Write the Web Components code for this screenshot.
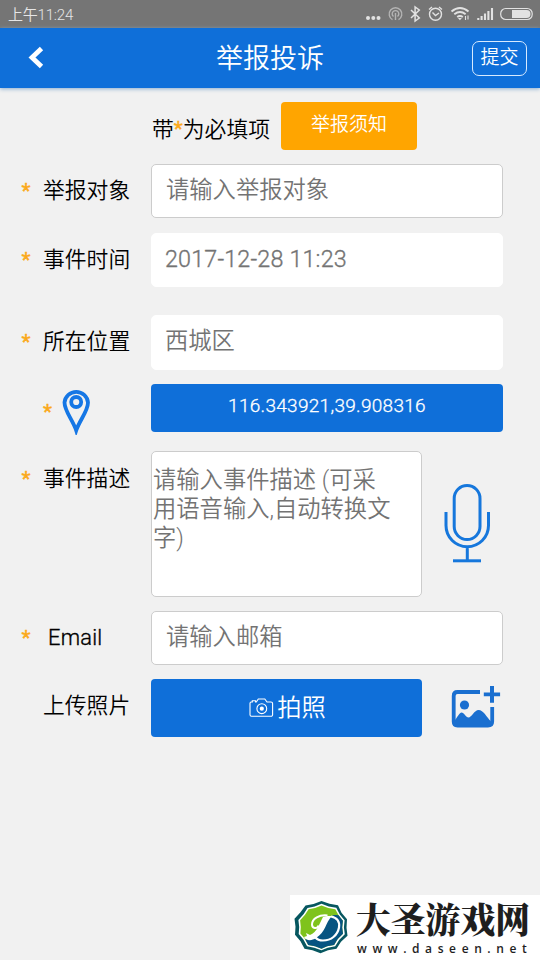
<!DOCTYPE html>
<html lang="zh-CN">
<head>
<meta charset="utf-8">
<title>举报投诉</title>
<style>
html,body{margin:0;height:100%;background:#f1f1f1}
body{font-family:Roboto,"Noto Sans CJK SC",sans-serif;overflow:hidden}
</style>
</head>
<body>
<report-page></report-page>
<script>
const define = (name, html) => customElements.define(name, class extends HTMLElement {
  constructor() {
    super();
    const t = document.createElement('template');
    t.innerHTML = html;
    this.attachShadow({mode: 'open'}).appendChild(t.content.cloneNode(true));
  }
});

define('status-bar', `
<style>
:host{display:flex;box-sizing:border-box;height:28px;padding:0 7px 0 8px;background:#757575;color:#e6e6e6;align-items:center;justify-content:space-between;font-size:15px;line-height:28px}
span{font-weight:350;letter-spacing:-.2px;padding-top:1px}
svg{display:block}
</style>
<span>上午11:24</span>
<svg width="170" height="28" viewBox="363 0 170 28" fill="none" stroke="#e2e2e2" stroke-width="1.4">
  <g fill="#e2e2e2" stroke="none"><circle cx="368" cy="18" r="2"/><circle cx="373.300" cy="18" r="2"/><circle cx="378.500" cy="18" r="2"/></g>
  <g stroke="#b4b4b4"><path d="M392.500 19.600a6.300 6.300 0 1 1 6 0M393.500 16.500a3.300 3.300 0 1 1 4 0M395.500 13v7"/></g>
  <path d="M411 10l8.300 8-4.200 3V7l4.200 3-8.300 8" stroke-width="1.500"/>
  <circle cx="435.500" cy="14.200" r="6"/><path d="M432.500 12.500l3 3 3.500-2.500M429 9.500l3-2.500M442 9.500L439 7"/>
  <path d="M451.500 11.500q8.500-7 17 0M454.300 14.200q5.700-4.500 11.300 0M457.200 17q2.800-2 5.600 0" stroke-width="1.900"/><path d="M459.900 20.300l-2-2.300h4z" fill="#e2e2e2" stroke="none"/><path d="M465.500 20v-4M468 15.500v4" stroke-width="1.100"/>
  <path d="M478.300 20v-2M481.600 20v-4M485 20v-6.500M488.400 20V11M492 20V8" stroke-width="2.100"/>
  <rect x="500.700" y="8.500" width="31.500" height="11" rx="5" stroke-width="1.200"/><path d="M512 10h14.500a4 4 0 0 1 0 8H512z" fill="#e2e2e2" stroke="none"/>
</svg>`);

define('title-bar', `
<style>
:host{display:grid;grid-template-columns:80px 1fr 80px;height:60px;background:#0f6fd9;color:#fff;align-items:center;box-shadow:0 1px 4px #8baed0;position:relative}
svg{display:block;margin-left:27px}
h1{margin:0;font-size:27px;font-weight:350;line-height:62px;text-align:center;height:60px}
button{box-sizing:border-box;width:55px;height:35px;margin:0 0 0 12px;padding:0;border:1.500px solid #d7eaff;border-radius:7px;background:none;color:#fff;font:350 19px/32px Roboto,"Noto Sans CJK SC",sans-serif}
</style>
<svg width="20" height="26" viewBox="27 45 20 26" fill="none" stroke="#fff" stroke-width="4.800"><path d="M41.500 48.500l-9.500 9 9.500 9"/></svg>
<h1><slot></slot></h1><button>提交</button>`);

define('required-mark', `
<style>:host{display:inline-block;width:9px;color:#fba919;font:400 21px/30px Roboto,sans-serif;-webkit-text-stroke:.4px #fba919}</style>*`);

define('form-row', `
<style>
:host{display:flex;height:var(--h);margin-top:var(--gap);align-items:flex-start}
.name{width:151px;flex:none;display:flex;box-sizing:border-box;padding-left:21.500px;font-size:21.800px;font-weight:350;line-height:30px;color:#000;padding-top:var(--label-top,12px)}
.mark{width:21.500px;flex:none;line-height:0}
.body{display:flex;width:352px;height:100%}
</style>
<div class="name"><div class="mark"><slot name="mark"></slot></div><slot name="name"></slot></div>
<div class="body"><slot></slot></div>`);

define('text-field', `
<style>
:host{display:block;box-sizing:border-box;width:352px;height:100%;border:1.500px solid var(--line,#fff);border-radius:5px;background:#fff;color:#737373;font-size:23.300px;font-weight:350;line-height:51px;padding-left:13px;white-space:nowrap}
:host([outlined]){--line:#ccc;padding-left:14px}
:host([latin]){-webkit-text-stroke:.35px #737373;letter-spacing:.18px}
:host([multi]){--line:#ccc;width:271px;padding:14px 25px 0 1px;line-height:28.800px;white-space:normal}
</style><slot></slot>`);

define('action-button', `
<style>
:host{display:flex;box-sizing:border-box;align-items:center;justify-content:center;width:var(--w,352px);height:100%;border-radius:4px;background:var(--fill,#0f6fd9);color:#fff;font-size:var(--size,19px);font-weight:350;padding-bottom:var(--lift,3px);line-height:1.500}
</style><slot></slot>`);

define('pin-icon', `<style>:host{display:block;margin-left:10px}svg{display:block}</style>
<svg width="29" height="46" viewBox="62 390 29 46" fill="none" stroke="#1677e5"><path d="M76.200 431.500C73 421.500 64.500 412 64.500 403.500a11.800 11.800 0 0 1 23.500 0C88 412 79.500 421.500 76.200 431.500z" stroke-width="3.800"/><circle cx="76.200" cy="403" r="5" stroke-width="3.800"/></svg>`);

define('mic-icon', `<style>:host{display:block;margin:32px 0 0 21px}svg{display:block}</style>
<svg width="48" height="82" viewBox="443 483 48 82" fill="none" stroke="#1677dc" stroke-width="3"><rect x="454.200" y="485.500" width="25.800" height="54" rx="12.900"/><path d="M446 512v13.500a21.200 21.200 0 0 0 42.500 0V512M467.300 547v13"/><path d="M453 560.800h28"/></svg>`);

define('camera-icon', `<style>:host{display:block;margin:0 3px 0 2px}svg{display:block}</style>
<svg width="25" height="20" viewBox="0 0 25 20" fill="none" stroke="#fff" stroke-width="1.100"><path d="M2 4h1.300V2.800h3.200V4h.8l2-3h6.500l2.200 3H22a1.600 1.600 0 0 1 1.600 1.600v11A1.500 1.500 0 0 1 22 18.200H2.500A1.500 1.500 0 0 1 1 16.700V5.500A1.500 1.500 0 0 1 2 4z"/><circle cx="12.800" cy="10.700" r="4.900"/><circle cx="12.800" cy="10.700" r="2.100" fill="#fff" stroke="none"/></svg>`);

define('add-photo-icon', `<style>:host{display:block;margin:6px 0 0 28px}svg{display:block}</style>
<svg width="52" height="44" viewBox="450 685 52 44" fill="#1a6fd0"><path d="M480 692H457.500Q453.700 692 453.700 696V721.500Q453.700 725.500 457.500 725.500H488Q492.200 725.500 492.200 721.500V707" fill="none" stroke="#1a6fd0" stroke-width="3.800"/><circle cx="464.500" cy="705" r="4.600"/><path d="M455 720c3-3.500 4.500-7.500 6.500-7.500 2.500 0 4.500 5 7 5 3 0 6-7.500 10-7.500 5 0 8 7 12.500 11.500v4.500h-36z"/><path d="M490 686h4v6.400h6.100v3.900h-6.100v6.400h-4v-6.400h-6.200v-3.900h6.200z"/></svg>`);

define('site-badge', `
<style>
:host{position:absolute;right:0;bottom:0;display:flex;box-sizing:border-box;width:250px;height:65px;background:#fff;padding-left:4px}
svg{display:block;margin-top:5px;flex:none}
.txt{margin-left:7px;color:#1e1e1e;white-space:nowrap}
b{display:block;font:900 34.800px/48px "Noto Serif CJK SC","Noto Sans CJK SC",serif;height:47px;margin-top:-1px}
small{display:block;font:600 12px/15px "Open Sans",sans-serif;letter-spacing:5.600px;margin-left:1px}
</style>
<svg width="55" height="55" viewBox="0 0 55 55"><path d="M27.500 1l8 2.800 8.500 1.500 3.500 7.500 5.500 6.500-.5 8.500 1 8-6.500 6-4.500 7-8.500 1.500-7.500 3-8-3-8-1.500-4-7.500-5.500-6.500.5-8-1-8 6-6.500L11.500 5.500l8-1.500z" fill="#075760"/><path d="M27.500 3.800l7.200 2.700 7.600 1.200 3.500 6.700 4.800 5.800-.7 7.300.9 6.800-5.700 5.600-3.900 6.400-7.500 1.400-6.300 2.600-7.100-2.600-7.200-1.400-3.700-6.700-4.700-5.700.5-7-.8-7 5.300-5.900 3.800-6 7.200-1.500z" fill="#fff"/><path d="M27.500 5.500l6.800 2.500 7 1.200 3.300 6 4.300 5.500-.7 6.800.8 6.200-5.300 5.300-3.600 6-7 1.300-5.600 2.400-6.500-2.400-6.800-1.300-3.400-6.200-4.400-5.400.4-6.400-.7-6.700 4.900-5.500 3.600-5.600 6.500-1.300z" fill="#7fc31c"/><path d="M43 15l1.600.2 4.300 5.500-.7 6.800.8 6.200-5.300 5.300-3.600 6-7 1.300-5.600 2.400-6.500-2.400-6.800-1.300-3-5.500C22 37 30 31 33 20c3-5 7-5 10-5z" fill="#075481"/><path d="M33.500 15.500c-8-1-15.500 3-15.500 9 0 4 5 5 6.500 1" fill="none" stroke="#fff" stroke-width="2"/><path d="M29 17c4-1.500 7-1 9-1-7 7-6 16-16 22-4 3-10 3-12-1l3-1-1-3 4 2c7-2 10-13 13-18z" fill="#fff"/><path d="M37 16.500c6 1 9 5 8 11-1.500 8-8 13-16 13-4 0-6-1-7.500-3" fill="none" stroke="#fff" stroke-width="2.200"/></svg>
<div class="txt"><b>大圣游戏网</b><small>www.daseen.net</small></div>`);

define('report-page', `
<style>
:host{display:block;position:relative;width:540px;height:960px;overflow:hidden;background:#f1f1f1}
.tip{display:flex;height:48px;margin-top:14px;padding-left:152px;font-size:21.800px;font-weight:350;line-height:30px;color:#000}
.tip p{margin:13px 0 0;width:129px;display:flex}
.tip required-mark{margin-top:-1px}
.email{padding-left:5px;-webkit-text-stroke:.35px #000;letter-spacing:.25px}
.coords{-webkit-text-stroke:.3px #fff;letter-spacing:.3px}
</style>
<status-bar></status-bar>
<title-bar>举报投诉</title-bar>
<div class="tip"><p>带<required-mark></required-mark>为必填项</p><action-button style="--w:136px;--fill:#ffa500;--lift:2px">举报须知</action-button></div>
<form-row style="--h:54px;--gap:14px"><required-mark slot="mark"></required-mark><span slot="name">举报对象</span><text-field outlined>请输入举报对象</text-field></form-row>
<form-row style="--h:54px;--gap:15px"><required-mark slot="mark"></required-mark><span slot="name">事件时间</span><text-field latin>2017-12-28 11:23</text-field></form-row>
<form-row style="--h:55px;--gap:28px"><required-mark slot="mark"></required-mark><span slot="name">所在位置</span><text-field>西城区</text-field></form-row>
<form-row style="--h:48px;--gap:14px;--label-top:5px"><div slot="name" style="display:flex"><required-mark style="margin-top:8px"></required-mark><pin-icon></pin-icon></div><action-button class="coords">116.343921,39.908316</action-button></form-row>
<form-row style="--h:146px;--gap:19px;--label-top:13px"><required-mark slot="mark"></required-mark><span slot="name">事件描述</span><text-field multi>请输入事件描述 (可采用语音输入,自动转换文字)</text-field><mic-icon></mic-icon></form-row>
<form-row style="--h:54px;--gap:14px"><required-mark slot="mark"></required-mark><span slot="name" class="email">Email</span><text-field outlined>请输入邮箱</text-field></form-row>
<form-row style="--h:58px;--gap:14px"><span slot="name">上传照片</span><action-button style="--w:271px;--size:24.300px;--lift:0px"><camera-icon></camera-icon>拍照</action-button><add-photo-icon></add-photo-icon></form-row>
<site-badge></site-badge>`);
</script>
</body>
</html>
